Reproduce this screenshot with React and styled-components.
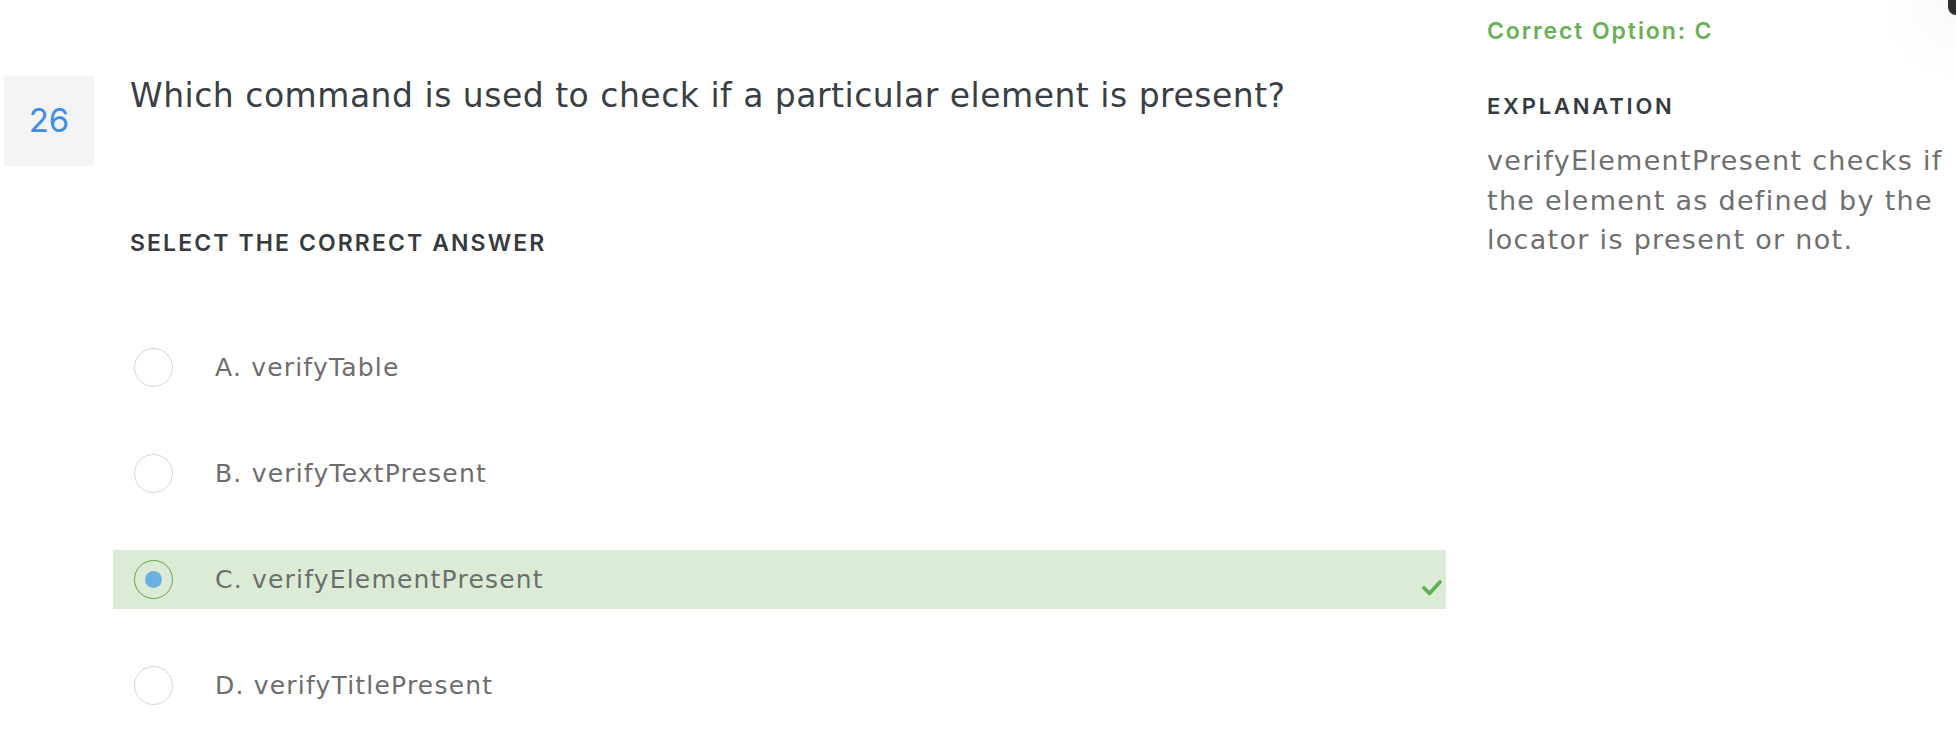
import React from "react";
import styled, { createGlobalStyle } from "styled-components";

const GlobalStyle = createGlobalStyle`
  html, body { margin: 0; padding: 0; background: #ffffff; }
  body { font-family: Inter, "Noto Sans", sans-serif; -webkit-font-smoothing: antialiased; }
  * { box-sizing: border-box; }
`;

const bodyFont = `"DejaVu Sans", Inter, sans-serif`;

const Page = styled.div`
  position: relative;
  display: flex;
  align-items: flex-start;
  width: 1956px;
  height: 744px;
  padding-left: 4px;
  overflow: hidden;
  background: #fff;
`;

const Main = styled.div`
  width: 1442px;
  display: flex;
  flex-direction: column;
  padding-top: 76px;
`;

const QuestionHeader = styled.div`
  display: flex;
  align-items: flex-start;
`;

const NumberBox = styled.div`
  width: 90px;
  height: 90px;
  flex: none;
  background: #f4f4f4;
  color: #3d8de6;
  font-size: 33px;
  font-weight: 400;
  display: flex;
  align-items: center;
  justify-content: center;
  padding-bottom: 3px;
`;

const QuestionText = styled.h1`
  margin: 0 0 0 36px;
  font-family: ${bodyFont};
  font-size: 33px;
  line-height: 40px;
  font-weight: 400;
  color: #3a3f45;
  letter-spacing: 0.5px;
`;

const SectionLabel = styled.div`
  margin: 63px 0 0 126px;
  font-size: 23px;
  line-height: 28px;
  font-weight: 600;
  color: #363b40;
  letter-spacing: 2.1px;
`;

const OptionList = styled.div`
  display: flex;
  flex-direction: column;
  gap: 47px;
  margin: 81px 0 0 109px;
`;

const OptionRow = styled.div`
  height: 59px;
  display: flex;
  align-items: center;
  padding-left: 21px;
  padding-right: 4px;
  background: ${(p) => (p.$correct ? "#dcebd6" : "transparent")};
`;

const Radio = styled.span`
  width: 39px;
  height: 39px;
  flex: none;
  border-radius: 50%;
  border: 1.5px solid ${(p) => (p.$checked ? "#62a64f" : "#d6d6d6")};
  display: flex;
  align-items: center;
  justify-content: center;
  background: ${(p) => (p.$checked ? "transparent" : "#fff")};
`;

const RadioDot = styled.span`
  width: 17px;
  height: 17px;
  border-radius: 50%;
  background: #6cb0e2;
`;

const OptionText = styled.span`
  margin-left: 42px;
  font-family: ${bodyFont};
  font-size: 25px;
  letter-spacing: 1.2px;
  color: #6d6d6d;
  flex: 1;
`;

const Check = styled.svg`
  align-self: flex-end;
  margin-bottom: 13px;
  width: 20px;
  height: 17px;
`;

const Sidebar = styled.aside`
  margin-left: 41px;
  width: 469px;
  display: flex;
  flex-direction: column;
`;

const CorrectOption = styled.div`
  margin-top: 16px;
  font-size: 23px;
  line-height: 30px;
  font-weight: 600;
  color: #69b057;
  letter-spacing: 1.9px;
`;

const ExplanationTitle = styled.div`
  margin-top: 46px;
  font-size: 22px;
  line-height: 28px;
  font-weight: 600;
  color: #333a40;
  letter-spacing: 2.8px;
`;

const ExplanationBody = styled.p`
  margin: 21px 0 0;
  font-family: ${bodyFont};
  font-size: 27px;
  line-height: 39.5px;
  letter-spacing: 1.3px;
  color: #6f6f6f;
`;

const CornerTab = styled.div`
  position: absolute;
  top: 0;
  right: 0;
  width: 8px;
  height: 15px;
  background: #2e2e2e;
  border-bottom-left-radius: 8px;
  box-shadow: 0 0 60px 30px rgba(0, 0, 0, 0.035);
`;

const options = [
  { key: "A", text: "verifyTable" },
  { key: "B", text: "verifyTextPresent" },
  { key: "C", text: "verifyElementPresent", correct: true },
  { key: "D", text: "verifyTitlePresent" },
];

export default function App() {
  return (
    <>
      <GlobalStyle />
      <Page>
        <Main>
          <QuestionHeader>
            <NumberBox>26</NumberBox>
            <QuestionText>
              Which command is used to check if a particular element is present?
            </QuestionText>
          </QuestionHeader>
          <SectionLabel>SELECT THE CORRECT ANSWER</SectionLabel>
          <OptionList>
            {options.map((o) => (
              <OptionRow key={o.key} $correct={o.correct}>
                <Radio $checked={o.correct}>{o.correct && <RadioDot />}</Radio>
                <OptionText>
                  {o.key}. {o.text}
                </OptionText>
                {o.correct && (
                  <Check viewBox="0 0 20 17">
                    <polyline
                      points="2,9 7.5,14.5 18,3"
                      fill="none"
                      stroke="#5fae55"
                      strokeWidth="3.6"
                      strokeLinecap="round"
                      strokeLinejoin="round"
                    />
                  </Check>
                )}
              </OptionRow>
            ))}
          </OptionList>
        </Main>
        <Sidebar>
          <CorrectOption>Correct Option: C</CorrectOption>
          <ExplanationTitle>EXPLANATION</ExplanationTitle>
          <ExplanationBody>
            verifyElementPresent checks if the element as defined by the locator is present or not.
          </ExplanationBody>
        </Sidebar>
        <CornerTab />
      </Page>
    </>
  );
}
